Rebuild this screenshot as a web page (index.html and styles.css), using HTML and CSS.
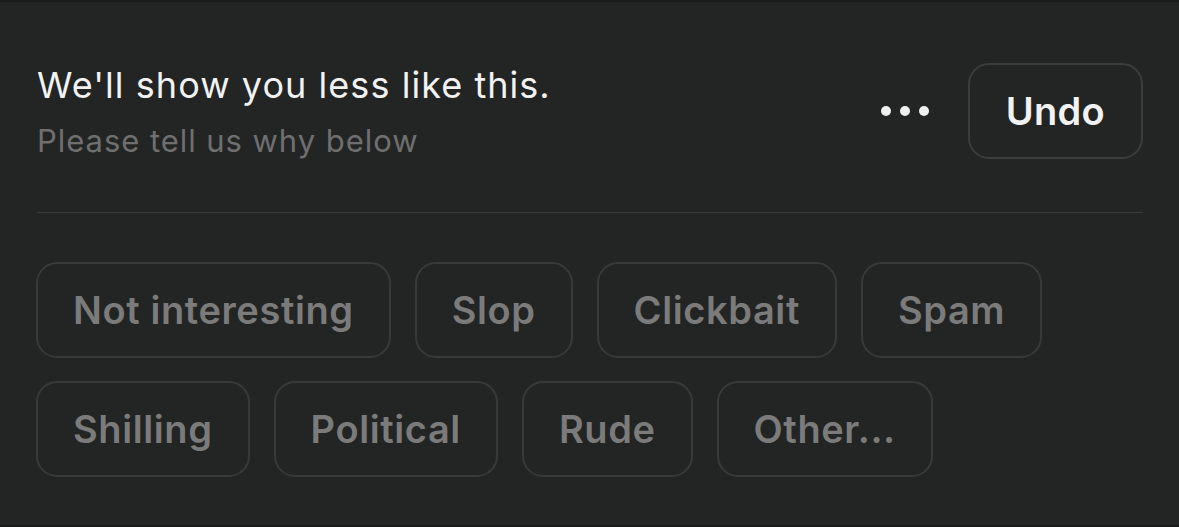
FILE: index.html
```html
<!DOCTYPE html>
<html>
<head>
<meta charset="utf-8">
<link rel="stylesheet" href="styles.css">
</head>
<body>
<div class="panel">
  <div class="header">
    <div class="texts">
      <div class="title">We'll show you less like this.</div>
      <div class="subtitle">Please tell us why below</div>
    </div>
    <div class="actions">
      <div class="dots"><span></span><span></span><span></span></div>
      <button class="undo">Undo</button>
    </div>
  </div>
  <div class="divider"></div>
  <div class="chips">
    <button class="chip">Not interesting</button>
    <button class="chip">Slop</button>
    <button class="chip">Clickbait</button>
    <button class="chip">Spam</button>
    <button class="chip">Shilling</button>
    <button class="chip">Political</button>
    <button class="chip">Rude</button>
    <button class="chip">Other...</button>
  </div>
</div>
</body>
</html>
```
FILE: styles.css
```css
html, body {
  margin: 0;
  padding: 0;
  background: #1a1b1b;
}
body {
  width: 1179px;
  height: 527px;
  overflow: hidden;
  font-family: Inter, "Noto Sans", sans-serif;
}
.panel {
  box-sizing: border-box;
  margin-top: 2px;
  height: 523px;
  background: #232424;
  padding: 61px 36px 0 37px;
}
.header {
  display: flex;
  align-items: center;
  justify-content: space-between;
  height: 96px;
}
.texts {
  align-self: flex-start;
  display: flex;
  flex-direction: column;
}
.title {
  color: #f2f2f2;
  font-size: 36px;
  line-height: 44px;
  letter-spacing: 1.05px;
}
.subtitle {
  margin-top: 12px;
  color: #6f6f6f;
  font-size: 31px;
  line-height: 44px;
  letter-spacing: 0.95px;
}
.actions {
  display: flex;
  align-items: center;
  gap: 39px;
}
.dots {
  display: flex;
  gap: 9px;
}
.dots span {
  width: 10px;
  height: 10px;
  border-radius: 50%;
  background: #f0f0f0;
}
.undo {
  box-sizing: border-box;
  height: 96px;
  padding: 0 36px;
  border: 2px solid #3b3c3c;
  border-radius: 21px;
  background: transparent;
  color: #f2f2f2;
  font-family: inherit;
  font-size: 38px;
  font-weight: 600;
  letter-spacing: 0.3px;
}
.divider {
  height: 1px;
  background: #3a3b3b;
  margin-top: 53px;
}
.chips {
  display: flex;
  flex-wrap: wrap;
  gap: 23px 24px;
  margin-top: 49px;
  margin-left: -1px;
  width: 1040px;
}
.chip {
  box-sizing: border-box;
  height: 96px;
  padding: 0 35px;
  border: 2px solid #383939;
  border-radius: 21px;
  background: transparent;
  color: #7b7b7b;
  font-family: inherit;
  font-size: 38px;
  font-weight: 600;
  letter-spacing: 0.6px;
}
```
